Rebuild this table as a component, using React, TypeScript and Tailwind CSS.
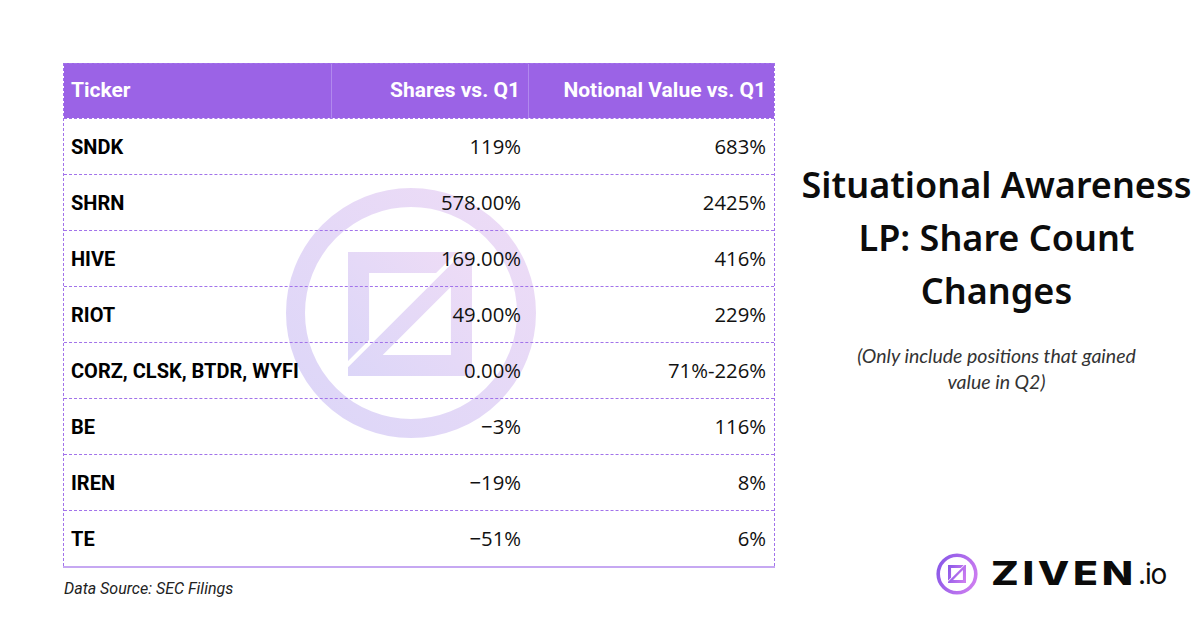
import React from "react";

type Row = { ticker: string; shares: string; notional: string };

const rows: Row[] = [
  { ticker: "SNDK", shares: "119%", notional: "683%" },
  { ticker: "SHRN", shares: "578.00%", notional: "2425%" },
  { ticker: "HIVE", shares: "169.00%", notional: "416%" },
  { ticker: "RIOT", shares: "49.00%", notional: "229%" },
  { ticker: "CORZ, CLSK, BTDR, WYFI", shares: "0.00%", notional: "71%-226%" },
  { ticker: "BE", shares: "\u22123%", notional: "116%" },
  { ticker: "IREN", shares: "\u221219%", notional: "8%" },
  { ticker: "TE", shares: "\u221251%", notional: "6%" },
];

// square frame split by a diagonal, used for both the watermark and the brand mark
function ZMark({ fill }: { fill: string }) {
  return (
    <>
      <polygon points="0,0 88,0 71,17 17,17 17,71 0,88" fill={fill} />
      <path
        d="M93,0 L100,0 L100,100 L0,100 L0,93 Z M28,83 L83,83 L83,28 Z"
        fill={fill}
        fillRule="evenodd"
      />
    </>
  );
}

function Watermark() {
  return (
    <svg
      width="250"
      height="250"
      viewBox="0 0 250 250"
      className="absolute left-[286px] top-[188px] z-0"
    >
      <defs>
        <linearGradient id="wm" x1="0" y1="1" x2="1" y2="0">
          <stop offset="0" stopColor="#dcd6f8" />
          <stop offset="1" stopColor="#eedcf6" />
        </linearGradient>
      </defs>
      <circle cx="125" cy="125" r="115.5" fill="none" stroke="url(#wm)" strokeWidth="19" />
      <g transform="translate(62 64) scale(1.24)">
        <ZMark fill="url(#wm)" />
      </g>
    </svg>
  );
}

function BrandIcon() {
  return (
    <svg width="42" height="42" viewBox="0 0 42 42">
      <defs>
        <linearGradient id="brand" x1="0" y1="0.3" x2="1" y2="0.7">
          <stop offset="0" stopColor="#8d5ae8" />
          <stop offset="1" stopColor="#cc7cf0" />
        </linearGradient>
      </defs>
      <circle cx="21" cy="21" r="18.8" fill="none" stroke="url(#brand)" strokeWidth="3.6" />
      <g transform="translate(12 12) scale(0.18)">
        <ZMark fill="url(#brand)" />
      </g>
    </svg>
  );
}

export default function App() {
  return (
    <div className="relative flex h-[628px] w-[1200px] overflow-hidden bg-white">
      <Watermark />

      {/* left: table */}
      <div className="relative z-10 ml-[63px] mt-[63px] flex w-[712px] flex-col">
        <div className="border-x border-dashed border-[#a273ea]">
          <div className="flex h-[55px] border-t border-dashed border-[#a273ea] bg-[#9b63e6] font-['Roboto',sans-serif] text-[21px] font-bold text-white">
            <div className="flex w-[268px] items-center border-r border-[#b189ee] pl-[7px]">Ticker</div>
            <div className="flex w-[197px] items-center justify-end border-r border-[#b189ee] pr-[8px]">
              Shares vs. Q1
            </div>
            <div className="flex flex-1 items-center justify-end pr-[8px]">Notional Value vs. Q1</div>
          </div>
          {rows.map((r) => (
            <div key={r.ticker} className="flex h-[56px] border-t border-dashed border-[#a273ea]">
              <div className="flex w-[268px] items-center pl-[7px] pt-[1px] font-['Roboto',sans-serif] text-[20px] font-bold text-black">
                {r.ticker}
              </div>
              <div className="flex w-[197px] items-center justify-end pr-[8px] font-['Open_Sans',sans-serif] text-[20.3px] text-[#111]">
                {r.shares}
              </div>
              <div className="flex flex-1 items-center justify-end pr-[8px] font-['Open_Sans',sans-serif] text-[20.3px] text-[#111]">
                {r.notional}
              </div>
            </div>
          ))}
        </div>
        <div className="h-[2px] bg-[#c6a8f2]" />
        <p className="mt-[9px] pl-[1px] font-['Roboto',sans-serif] text-[16px] italic text-[#222]">
          Data Source: SEC Filings
        </p>
      </div>

      {/* right: title and brand */}
      <div className="relative z-10 flex flex-1 flex-col">
        <div className="mt-[158px] flex flex-col items-center pl-[18px]">
          <h1 className="text-center font-['Noto_Sans',sans-serif] text-[36px] font-semibold leading-[53px] text-[#0c0c0c]">
            Situational Awareness
            <br />
            LP: Share Count
            <br />
            Changes
          </h1>
          <p className="mt-[26px] text-center font-['Lato',sans-serif] text-[19.5px] italic leading-[26px] text-[#333]">
            (Only include positions that gained
            <br />
            value in Q2)
          </p>
        </div>
        <div className="mt-auto mb-[30px] flex items-center pl-[161px]">
          <BrandIcon />
          <span className="ml-[13px] w-[147px] shrink-0">
            <span className="inline-block origin-left scale-x-[1.28] font-['Inter',sans-serif] text-[32px] font-extrabold tracking-[0.09em] text-[#0b0b0b]">
              ZIVEN
            </span>
          </span>
          <span className="font-['Inter',sans-serif] text-[28px] font-normal tracking-[-0.04em] text-[#0b0b0b]">
            .io
          </span>
        </div>
      </div>
    </div>
  );
}
